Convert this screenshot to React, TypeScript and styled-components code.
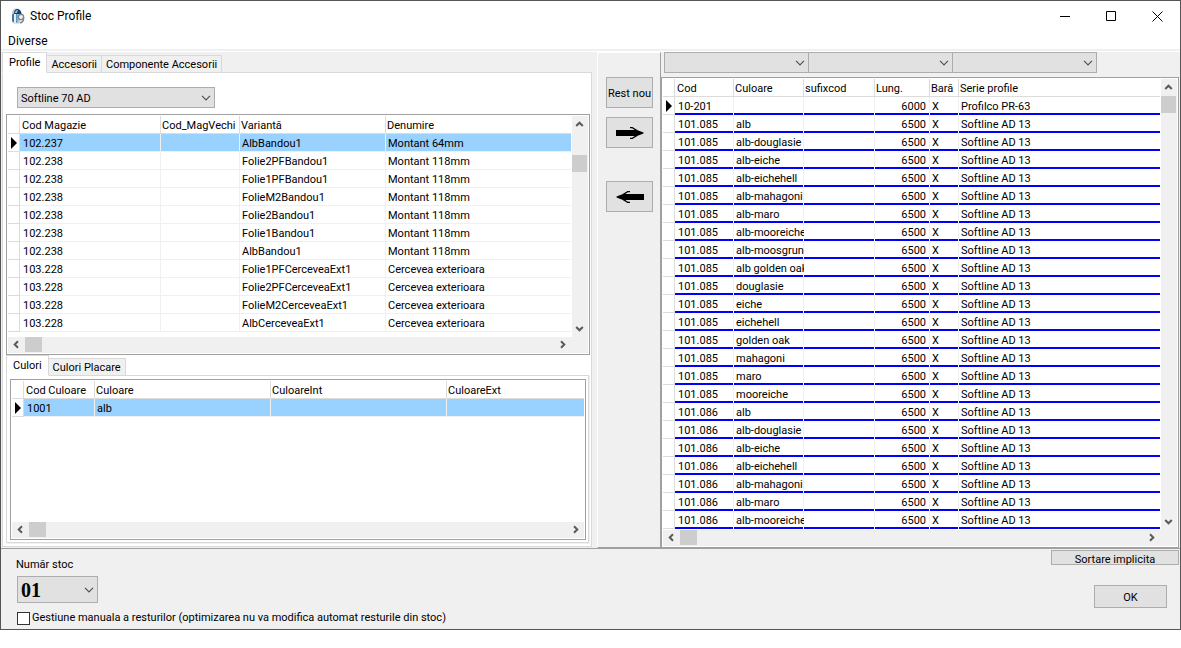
import React from "react";
import styled, { createGlobalStyle, css } from "styled-components";

const GlobalStyle = createGlobalStyle`
  *, *::before, *::after { box-sizing: border-box; }
  body {
    margin: 0;
    background: #fff;
    color: #000;
    font: 11px/16px Roboto, "Liberation Sans", sans-serif;
  }
  button, select, input { font: inherit; color: inherit; margin: 0; }
`;

const FACE = "#f0f0f0";
const BUTTON = "#e1e1e1";
const EDGE = "#adadad";
const LINE = "#dcdcdc";
const SHADOW = "#a0a0a0";

const Window = styled.main`
  display: flex;
  flex-direction: column;
  border: 1px solid #555;
  background: #fff;
`;

const TitleBar = styled.header`
  display: flex;
  align-items: center;
  height: 30px;
  padding-left: 10px;
`;

const Title = styled.h1`
  flex: 1;
  margin: 0 0 0 5px;
  font-size: 12px;
  font-weight: normal;
  line-height: 18px;
`;

const CaptionButton = styled.button`
  display: grid;
  place-items: center;
  width: 46px;
  height: 29px;
  padding: 0;
  border: 0;
  background: none;
`;

const MenuBar = styled.nav`
  height: 20px;
  padding-left: 3px;
  border-bottom: 2px solid ${FACE};
  margin-bottom: 1px;
`;

const MenuItem = styled.button`
  height: 18px;
  padding: 2px 4px 0;
  border: 0;
  background: none;
  font-size: 12px;
  line-height: 16px;
`;

const Body = styled.div`
  display: flex;
  background: ${FACE};
`;

const LeftPane = styled.section`
  flex: 1 1 596px;
  min-width: 0;
  padding: 0 5px 1px 1px;
`;

const TransferPane = styled.section`
  flex: none;
  display: flex;
  flex-direction: column;
  gap: 9px;
  width: 64px;
  padding: 24px 0 0 8px;
  border: 1px solid #fff;
  border-right-color: ${SHADOW};
  border-bottom-color: ${SHADOW};
`;

const RightPane = styled.section`
  flex: 1 1 519px;
  min-width: 0;
  padding-right: 1px;
`;

const TabList = styled.div`
  display: flex;
  align-items: flex-end;
  height: 21px;
  margin-bottom: -1px;
`;

const Tab = styled.button<{ $active?: boolean }>`
  position: relative;
  height: 18px;
  padding: 2px 4px 0;
  border: 1px solid #d9d9d9;
  border-left-width: 0;
  background: ${FACE};
  line-height: 14px;
  white-space: nowrap;
  ${(p) =>
    p.$active &&
    css`
      height: 21px;
      padding: 0 6px;
      border-left-width: 1px;
      border-bottom-color: #fff;
      background: #fff;
    `}
`;

const TabPage = styled.div`
  padding: 14px 1px 3px 3px;
  border: 1px solid #d9d9d9;
  background: #fff;
`;

const InnerPage = styled.div`
  margin-right: 1px;
  padding: 3px 2px 2px 3px;
  border: 1px solid #d9d9d9;
  box-shadow: 1px 1px 0 ${FACE};
`;

const SelectBox = styled.div<{ $width: number; $height?: number }>`
  position: relative;
  flex: none;
  width: ${(p) => p.$width}px;
  height: ${(p) => p.$height ?? 21}px;

  select {
    appearance: none;
    display: block;
    width: 100%;
    height: 100%;
    padding: 2px 20px 0 3px;
    border: 1px solid ${EDGE};
    border-radius: 0;
    background: ${BUTTON};
  }
  svg {
    position: absolute;
    right: 4px;
    top: calc(50% - 3px);
    pointer-events: none;
  }
`;

const ProfileSelect = styled.div`
  margin: 0 0 6px 11px;
`;

const FilterRow = styled.div`
  display: flex;
  padding-left: 3px;
  margin-bottom: 4px;

  > * + * { margin-left: -1px; }
`;

const StockNumber = styled.div`
  margin: 3px 0 7px 1px;

  select {
    padding-top: 0;
    font: bold 20px/24px "Liberation Serif", serif;
  }
`;

const PushButton = styled.button<{ $width: number; $height: number; $apart?: boolean }>`
  display: grid;
  place-items: center;
  width: ${(p) => p.$width}px;
  height: ${(p) => p.$height}px;
  padding: 2px 0 0;
  margin-top: ${(p) => (p.$apart ? 24 : 0)}px;
  border: 1px solid ${EDGE};
  background: ${BUTTON};
  line-height: 13px;
  white-space: nowrap;

  &:has(svg) { padding: 0; }
`;

const GridFrame = styled.div`
  padding: 1px;
  border: 1px solid ${SHADOW};
  background: #fff;
`;

const GridBody = styled.div<{ $height: number }>`
  display: flex;
  min-height: ${(p) => p.$height}px;
`;

const TableHolder = styled.div`
  flex: 1;
  min-width: 0;
`;

const Table = styled.table<{ $blue?: boolean }>`
  width: 100%;
  table-layout: fixed;
  border-collapse: separate;
  border-spacing: 0;

  th, td {
    height: 18px;
    padding: 2px 0 0 2px;
    border-right: 1px solid ${FACE};
    border-bottom: 1px solid ${FACE};
    line-height: 15px;
    text-align: left;
    font-weight: normal;
    white-space: nowrap;
    overflow: hidden;
  }
  td:nth-child(2) { padding-left: 3px; }
  th {
    padding-left: 1px;
    border-color: ${LINE};
  }
  th:nth-child(2) { padding-left: 2px; }
  th:last-child, td:last-child { border-right: 0; }
  td:first-child {
    padding: 0;
    border-color: ${LINE};
  }
  td:first-child svg { display: block; margin-left: 3px; }

  ${(p) =>
    p.$blue &&
    css`
      td:not(:first-child) {
        padding-bottom: 1px;
        border-right: 0;
        border-bottom: 0;
        background:
          linear-gradient(${FACE}, ${FACE}) right top / 1px 100% no-repeat,
          linear-gradient(#00f, #00f) left bottom / 100% 2px no-repeat;
      }
      td:last-child {
        background: linear-gradient(#00f, #00f) left bottom / 100% 2px no-repeat;
      }
    `}
`;

const Row = styled.tr<{ $selected?: boolean }>`
  td:not(:first-child) {
    ${(p) => p.$selected && "background: #99d1ff;"}
  }
`;

const NumberCell = styled.td`
  && { text-align: right; padding-right: 4px; }
`;

const Scrollbar = styled.div<{ $vertical?: boolean }>`
  display: flex;
  flex: none;
  flex-direction: ${(p) => (p.$vertical ? "column" : "row")};
  ${(p) => (p.$vertical ? "width: 16px; margin-left: 1px;" : "height: 16px;")}
  background: ${FACE};
`;

const ScrollArrow = styled.button<{ $vertical?: boolean }>`
  display: grid;
  place-items: center;
  flex: none;
  width: ${(p) => (p.$vertical ? 15 : 17)}px;
  height: ${(p) => (p.$vertical ? 17 : 15)}px;
  padding: 0;
  border: 0;
  background: none;
`;

const Track = styled.div<{ $vertical?: boolean; $start: number }>`
  flex: 1;
  padding: ${(p) => (p.$vertical ? `${p.$start}px 0 0` : `0 0 0 ${p.$start}px`)};
`;

const Thumb = styled.div<{ $vertical?: boolean }>`
  width: ${(p) => (p.$vertical ? 15 : 17)}px;
  height: ${(p) => (p.$vertical ? 17 : 15)}px;
  background: #cdcdcd;
`;

const BottomScroll = styled.div<{ $corner?: boolean }>`
  padding-right: ${(p) => (p.$corner ? 17 : 0)}px;
  background: ${FACE};
`;

const Footer = styled.footer`
  display: flex;
  justify-content: space-between;
  height: 81px;
  border-top: 1px solid ${SHADOW};
  background: ${FACE};
`;

const StockForm = styled.div`
  padding: 8px 0 0 15px;
`;

const FooterActions = styled.div`
  display: flex;
  flex-direction: column;
  align-items: flex-end;
  gap: 20px;
  padding: 1px 1px 0 0;
`;

const OkHolder = styled.div`
  padding-right: 12px;
`;

const CheckLine = styled.label`
  display: flex;
  align-items: center;
  gap: 2px;
  padding-left: 1px;
  white-space: nowrap;

  input {
    appearance: none;
    width: 13px;
    height: 13px;
    border: 1px solid #333;
    background: #fff;
  }
  input:checked { box-shadow: inset 0 0 0 2px #fff; background: #333; }
`;

const Chevron = () => (
  <svg width="10" height="6" viewBox="0 0 10 6" fill="none" stroke="#505050" strokeWidth="1.2">
    <path d="M1 0.8 L5 4.8 L9 0.8" />
  </svg>
);

const turns = { up: 0, right: 90, down: 180, left: 270 };

const ArrowGlyph = ({ dir }: { dir: keyof typeof turns }) => (
  <svg width="9" height="9" viewBox="0 0 9 9" fill="none" stroke="#5a5a5a" strokeWidth="2">
    <path d="M1.2 6 L4.5 2.7 L7.8 6" transform={`rotate(${turns[dir]} 4.5 4.5)`} />
  </svg>
);

const RowMarker = () => (
  <svg width="7" height="12" viewBox="0 0 7 12">
    <path d="M0 0 L6 6 L0 12 Z" fill="#000" />
  </svg>
);

const TransferArrow = ({ back }: { back?: boolean }) => (
  <svg width="28" height="12" viewBox="0 0 28 12">
    <g transform={back ? "matrix(-1 0 0 1 28 0)" : undefined}>
      <path d="M0 3 H21 L27.5 5.4 V6.6 L21 9 H0 Z" fill="#000" />
      <path d="M14 .5 H16 L21 3.6 M14 11.5 H16 L21 8.4" fill="none" stroke="#000" strokeWidth="1.3" />
    </g>
  </svg>
);

const AppIcon = () => (
  <svg width="14" height="16" viewBox="0 0 14 16">
    <path d="M1 14 V6 Q1 .5 5.5 .5 Q10 .5 10.5 6 V10 L8 15.5 H3 Z" fill="#b9c6cf" />
    <path d="M3 6 Q3 1 6.5 1 Q10 1.5 10.5 6 Z" fill="#123f70" />
    <path d="M4 4.5 Q4.5 1.5 7 2 L6 5 H4 Z" fill="#8ec4e6" />
    <path d="M1 6.5 L3 5.5 V14.5 L1 13 Z" fill="#3c78a8" />
    <path d="M3 6 H5 V15 H3 Z" fill="#e6edf1" />
    <path d="M5 6 H6.5 V14.5 H5 Z" fill="#5e93ba" />
    <ellipse cx="10" cy="9" rx="2.6" ry="2.6" fill="#eef1f3" stroke="#7b858d" strokeWidth="1.3" />
    <path d="M12.6 9 Q13 14 9 15" fill="none" stroke="#7b858d" strokeWidth="1.4" />
  </svg>
);

type SelectProps = { label: string; width: number; height?: number; value?: string };

const Select = ({ label, width, height, value = "" }: SelectProps) => (
  <SelectBox $width={width} $height={height}>
    <select aria-label={label} defaultValue={value}>
      <option value={value}>{value}</option>
    </select>
    <Chevron />
  </SelectBox>
);

const HScroll = ({ corner }: { corner?: boolean }) => (
  <BottomScroll $corner={corner}>
    <Scrollbar>
      <ScrollArrow aria-label="Scroll left"><ArrowGlyph dir="left" /></ScrollArrow>
      <Track $start={0}><Thumb /></Track>
      <ScrollArrow aria-label="Scroll right"><ArrowGlyph dir="right" /></ScrollArrow>
    </Scrollbar>
  </BottomScroll>
);

const VScroll = ({ start }: { start: number }) => (
  <Scrollbar $vertical>
    <ScrollArrow $vertical aria-label="Scroll up"><ArrowGlyph dir="up" /></ScrollArrow>
    <Track $vertical $start={start}><Thumb $vertical /></Track>
    <ScrollArrow $vertical aria-label="Scroll down"><ArrowGlyph dir="down" /></ScrollArrow>
  </Scrollbar>
);

type GridProps = {
  heads: string[];
  widths: number[];
  rows: string[][];
  height: number;
  blue?: boolean;
  highlight?: boolean;
  numeric?: number;
  scrollStart?: number;
};

const Grid = ({ heads, widths, rows, height, blue, highlight, numeric, scrollStart }: GridProps) => (
  <GridFrame>
    <GridBody $height={height}>
      <TableHolder>
        <Table $blue={blue}>
          <colgroup>
            <col style={{ width: 12 }} />
            {heads.map((h, i) => (
              <col key={h} style={{ width: widths[i] }} />
            ))}
          </colgroup>
          <thead>
            <tr>
              <th />
              {heads.map((h) => <th key={h} scope="col">{h}</th>)}
            </tr>
          </thead>
          <tbody>
            {rows.map((r, i) => (
              <Row key={i} $selected={highlight && i === 0}>
                <td>{i === 0 && <RowMarker />}</td>
                {r.map((c, j) =>
                  j === numeric ? <NumberCell key={j}>{c}</NumberCell> : <td key={j}>{c}</td>
                )}
              </Row>
            ))}
          </tbody>
        </Table>
      </TableHolder>
      {scrollStart !== undefined && <VScroll start={scrollStart} />}
    </GridBody>
    <HScroll corner={scrollStart !== undefined} />
  </GridFrame>
);

const profiles: string[][] = [
  ["102.237", "", "AlbBandou1", "Montant 64mm"],
  ...["Folie2PFBandou1", "Folie1PFBandou1", "FolieM2Bandou1", "Folie2Bandou1", "Folie1Bandou1", "AlbBandou1"].map(
    (v) => ["102.238", "", v, "Montant 118mm"]
  ),
  ...["Folie1PFCerceveaExt1", "Folie2PFCerceveaExt1", "FolieM2CerceveaExt1", "AlbCerceveaExt1"].map(
    (v) => ["103.228", "", v, "Cercevea exterioara"]
  ),
];

const stockRow = (code: string) => (colour: string) => [code, colour, "", "6500", "X", "Softline AD 13"];

const stock: string[][] = [
  ["10-201", "", "", "6000", "X", "Profilco PR-63"],
  ...[
    "alb", "alb-douglasie", "alb-eiche", "alb-eichehell", "alb-mahagoni", "alb-maro", "alb-mooreiche",
    "alb-moosgrun", "alb golden oak", "douglasie", "eiche", "eichehell", "golden oak", "mahagoni", "maro",
    "mooreiche",
  ].map(stockRow("101.085")),
  ...["alb", "alb-douglasie", "alb-eiche", "alb-eichehell", "alb-mahagoni", "alb-maro", "alb-mooreiche"].map(
    stockRow("101.086")
  ),
];

export default function App() {
  return (
    <Window>
      <GlobalStyle />
      <TitleBar>
        <AppIcon />
        <Title>Stoc Profile</Title>
        <CaptionButton aria-label="Minimize">
          <svg width="11" height="11" viewBox="0 0 11 11"><path d="M0 5.5 H10" stroke="#000" /></svg>
        </CaptionButton>
        <CaptionButton aria-label="Maximize">
          <svg width="11" height="11" viewBox="0 0 11 11"><path d="M.5 .5 H9.5 V9.5 H.5 Z" fill="none" stroke="#000" /></svg>
        </CaptionButton>
        <CaptionButton aria-label="Close">
          <svg width="11" height="11" viewBox="0 0 11 11"><path d="M.5 .5 L10.5 10.5 M10.5 .5 L.5 10.5" stroke="#000" /></svg>
        </CaptionButton>
      </TitleBar>
      <MenuBar>
        <MenuItem>Diverse</MenuItem>
      </MenuBar>

      <Body>
        <LeftPane>
          <TabList role="tablist">
            <Tab role="tab" aria-selected="true" $active>Profile</Tab>
            <Tab role="tab" aria-selected="false">Accesorii</Tab>
            <Tab role="tab" aria-selected="false">Componente Accesorii</Tab>
          </TabList>
          <TabPage>
            <ProfileSelect>
              <Select label="Serie" width={198} value="Softline 70 AD" />
            </ProfileSelect>
            <Grid
              heads={["Cod Magazie", "Cod_MagVechi", "Variantă", "Denumire"]}
              widths={[141, 79, 146]}
              rows={profiles}
              height={221}
              highlight
              scrollStart={22}
            />
            <TabList role="tablist">
              <Tab role="tab" aria-selected="true" $active>Culori</Tab>
              <Tab role="tab" aria-selected="false">Culori Placare</Tab>
            </TabList>
            <InnerPage>
              <Grid
                heads={["Cod Culoare", "Culoare", "CuloareInt", "CuloareExt"]}
                widths={[71, 176, 176]}
                rows={[["1001", "alb", "", ""]]}
                height={141}
                highlight
              />
            </InnerPage>
          </TabPage>
        </LeftPane>

        <TransferPane>
          <PushButton $width={47} $height={31}>Rest nou</PushButton>
          <PushButton $width={47} $height={31} aria-label="Adauga"><TransferArrow /></PushButton>
          <PushButton $width={47} $height={31} $apart aria-label="Scoate"><TransferArrow back /></PushButton>
        </TransferPane>

        <RightPane>
          <FilterRow>
            <Select label="Cod" width={145} />
            <Select label="Culoare" width={145} />
            <Select label="Serie profile" width={145} />
          </FilterRow>
          <Grid
            heads={["Cod", "Culoare", "sufixcod", "Lung.", "Bară", "Serie profile"]}
            widths={[59, 70, 71, 55, 29]}
            rows={stock}
            height={451}
            blue
            numeric={3}
            scrollStart={0}
          />
        </RightPane>
      </Body>

      <Footer>
        <StockForm>
          <label htmlFor="stock-number">Număr stoc</label>
          <StockNumber>
            <SelectBox $width={81} $height={27}>
              <select id="stock-number" defaultValue="01">
                <option value="01">01</option>
              </select>
              <Chevron />
            </SelectBox>
          </StockNumber>
          <CheckLine>
            <input type="checkbox" />
            Gestiune manuala a resturilor (optimizarea nu va modifica automat resturile din stoc)
          </CheckLine>
        </StockForm>
        <FooterActions>
          <PushButton $width={128} $height={15}>Sortare implicita</PushButton>
          <OkHolder>
            <PushButton $width={73} $height={23}>OK</PushButton>
          </OkHolder>
        </FooterActions>
      </Footer>
    </Window>
  );
}
